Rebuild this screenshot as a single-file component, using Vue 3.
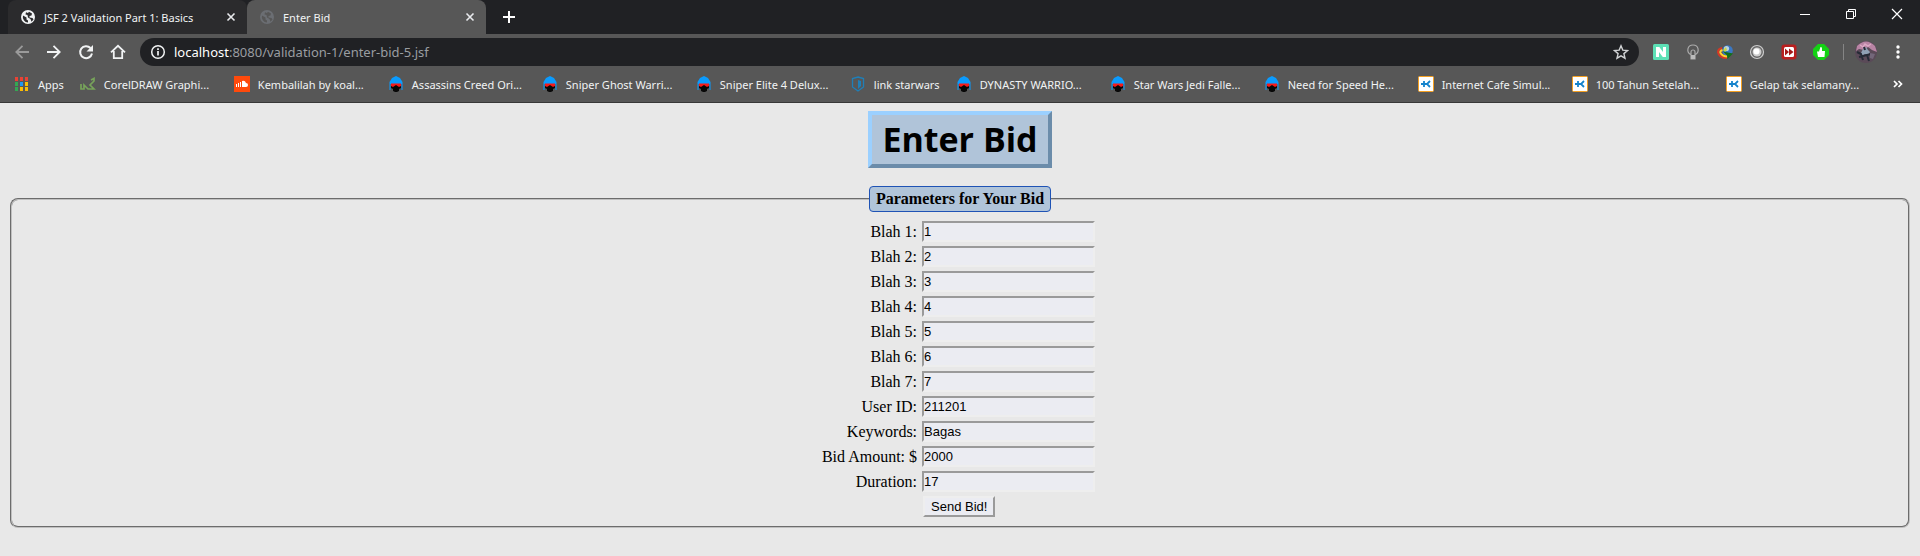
<script setup>
const bookmarks = [
  { icon: 'apps', label: 'Apps', short: true },
  { icon: 'snake', label: 'CorelDRAW Graphi...' },
  { icon: 'cloud', label: 'Kembalilah by koal...' },
  { icon: 'skull', label: 'Assassins Creed Ori...' },
  { icon: 'skull', label: 'Sniper Ghost Warri...' },
  { icon: 'skull', label: 'Sniper Elite 4 Delux...' },
  { icon: 'shield', label: 'link starwars', short: true },
  { icon: 'skull', label: 'DYNASTY WARRIO...' },
  { icon: 'skull', label: 'Star Wars Jedi Falle...' },
  { icon: 'skull', label: 'Need for Speed He...' },
  { icon: 'kaskus', label: 'Internet Cafe Simul...' },
  { icon: 'kaskus', label: '100 Tahun Setelah...' },
  { icon: 'kaskus', label: 'Gelap tak selamany...' }
]
const appDots = ['#ea4335', '#ea4335', '#ea4335', '#34a853', '#2196f3', '#fbbc05', '#34a853', '#fbbc05', '#fbbc05']
const fields = [
  { id: 'blah1', label: 'Blah 1:', value: '1' },
  { id: 'blah2', label: 'Blah 2:', value: '2' },
  { id: 'blah3', label: 'Blah 3:', value: '3' },
  { id: 'blah4', label: 'Blah 4:', value: '4' },
  { id: 'blah5', label: 'Blah 5:', value: '5' },
  { id: 'blah6', label: 'Blah 6:', value: '6' },
  { id: 'blah7', label: 'Blah 7:', value: '7' },
  { id: 'userId', label: 'User ID:', value: '211201' },
  { id: 'keywords', label: 'Keywords:', value: 'Bagas' },
  { id: 'bidAmount', label: 'Bid Amount: $', value: '2000' },
  { id: 'duration', label: 'Duration:', value: '17' }
]
const globe = 'M8 1a7 7 0 1 0 0 14A7 7 0 0 0 8 1zM3 6.500l3.500 2v2l1.500 1v2A5.600 5.600 0 0 1 3 6.500zM6 3.200l2 .8 1-1.300 3 1.800-.5 2-2 .5v1.500l3 .5 1 1.500-2 2.200-1-2.700-2.500-1.500-.5-2.500-2-.5z'
</script>

<template>
  <div class="browser">
    <header class="chrome">
      <div class="tab-strip">
        <div class="tab">
          <svg class="i16" viewBox="0 0 16 16"><path :d="globe" fill="#f1f3f4" fill-rule="evenodd" /></svg>
          <span class="tab-title">JSF 2 Validation Part 1: Basics</span>
          <button class="bare" aria-label="Close tab"><svg class="i16" viewBox="0 0 16 16"><path d="M4.500 4.500l7 7m0-7l-7 7" stroke="#e8eaed" stroke-width="1.600" /></svg></button>
        </div>
        <div class="tab active">
          <svg class="i16" viewBox="0 0 16 16"><path :d="globe" fill="#6b6e73" fill-rule="evenodd" /></svg>
          <span class="tab-title">Enter Bid</span>
          <button class="bare" aria-label="Close tab"><svg class="i16" viewBox="0 0 16 16"><path d="M4.500 4.500l7 7m0-7l-7 7" stroke="#e8eaed" stroke-width="1.600" /></svg></button>
        </div>
        <button class="bare new-tab" aria-label="New tab"><svg class="i16" viewBox="0 0 16 16"><path d="M8 2v12M2 8h12" stroke="#fff" stroke-width="2" /></svg></button>
        <div class="window-controls">
          <button class="bare" aria-label="Minimize"><svg class="i16" viewBox="0 0 16 16"><path d="M3 8.500h10" stroke="#fff" /></svg></button>
          <button class="bare" aria-label="Restore"><svg class="i16" viewBox="0 0 16 16"><path d="M3.500 5.500h7v7h-7zM5.500 5.500v-2h7v7h-2" fill="none" stroke="#fff" /></svg></button>
          <button class="bare" aria-label="Close"><svg class="i16" viewBox="0 0 16 16"><path d="M3 3l10 10M13 3L3 13" stroke="#fff" stroke-width="1.200" /></svg></button>
        </div>
      </div>

      <div class="toolbar">
        <nav class="nav">
          <button class="bare" aria-label="Back"><svg class="i16" viewBox="0 0 16 16"><path d="M15 8H2.500M8.500 1.800L2.300 8l6.200 6.200" fill="none" stroke="#9a9a9a" stroke-width="1.800" /></svg></button>
          <button class="bare" aria-label="Forward"><svg class="i16" viewBox="0 0 16 16"><path d="M1 8h12.500M7.500 1.800L13.700 8l-6.200 6.200" fill="none" stroke="#f1f3f4" stroke-width="1.800" /></svg></button>
          <button class="bare" aria-label="Reload"><svg class="i16" viewBox="0 0 16 16"><path d="M12.500 4A6 6 0 1 0 14 9.500" fill="none" stroke="#f1f3f4" stroke-width="2" /><path d="M15 1v6.500H8.500z" fill="#f1f3f4" /></svg></button>
          <button class="bare" aria-label="Home"><svg class="i16" viewBox="0 0 16 16"><path d="M1 8.300L8 1.800l7 6.500M3.800 7v7.200h8.400V7" fill="none" stroke="#f1f3f4" stroke-width="1.800" /></svg></button>
        </nav>
        <div class="omnibox">
          <svg class="i16" viewBox="0 0 16 16"><circle cx="8" cy="8" r="6.300" fill="none" stroke="#f1f3f4" stroke-width="1.500" /><path d="M8 7v4.500M8 4.300v1.700" stroke="#f1f3f4" stroke-width="1.700" /></svg>
          <a class="url" href="#"><b>localhost</b>:8080/validation-1/enter-bid-5.jsf</a>
          <button class="bare" aria-label="Bookmark this page"><svg class="i16" viewBox="0 0 16 16"><path d="M8 1.800l1.800 4.300 4.700.4-3.600 3.100 1.100 4.600L8 11.800l-4 2.400 1.100-4.600L1.500 6.500l4.700-.4z" fill="none" stroke="#d0d2d4" stroke-width="1.400" /></svg></button>
        </div>
        <div class="extensions">
          <button class="bare" aria-label="N extension"><svg class="i16" viewBox="0 0 16 16"><rect width="16" height="16" rx="1.500" fill="#5ce0b5" /><path d="M3 3h3.300l3.700 5V3h3v10H9.800L6 8v5H3z" fill="#fff" /></svg></button>
          <button class="bare" aria-label="Lights"><svg class="i16" viewBox="0 0 16 16"><path d="M5.500 10.500C1 7.500 2.500 1 8 1s7 6.500 2.500 9.500M6 15V8a2 2 0 0 1 4 0v7z" fill="none" stroke="#aaa" stroke-width="1.200" /><path d="M6 11h4v4H6z" fill="#bbb" /></svg></button>
          <button class="bare" aria-label="Download manager"><svg class="i16" viewBox="0 0 16 16"><circle cx="10.500" cy="6.500" r="5.300" fill="#3a78c4" /><circle cx="9.500" cy="4.500" r="2.600" fill="#b9d3e6" /><path d="M6 6l3-3 1 3-2 2z" fill="#c9d84a" /><path d="M5 4q-4 1-4 4 1 6 9 6" fill="none" stroke="#d63824" stroke-width="2" /><path d="M5.500 6q-3 1-2 3 2 3.500 7 3.500" fill="none" stroke="#ffd52e" stroke-width="2" /><path d="M6 7.500l10 2-5.500 5.500-.5-3.500z" fill="#14701a" /></svg></button>
          <button class="bare" aria-label="Sphere"><svg class="i16" viewBox="0 0 16 16"><circle cx="8" cy="8" r="6.500" fill="#666" stroke="#ccc" stroke-width="1.200" /><circle cx="8" cy="8" r="4.500" fill="#ccc" /><circle cx="7.500" cy="7.500" r="3" fill="#fff" /></svg></button>
          <button class="bare" aria-label="Skip ahead"><svg class="i16" viewBox="0 0 16 16"><rect x=".5" y=".5" width="15" height="15" rx="3" fill="#b91f1f" /><rect x="3" y="3" width="10" height="10" rx="1.500" fill="#fff" /><path d="M4 4.500L8 8l-4 3.500zM8 4.500L12.500 8 8 11.500z" fill="#a51818" /></svg></button>
          <button class="bare" aria-label="Thumbs up"><svg class="i16" viewBox="0 0 16 16"><path d="M5 0h6l5 5v6l-5 5H5l-5-5V5z" fill="#14d114" /><path d="M4 7.500h2L7.500 3q1.500-.5 1.500 1.500V7h3l-.5 6H5z" fill="#fff" /></svg></button>
        </div>
        <span class="divider"></span>
        <button class="bare avatar" aria-label="Profile"><svg viewBox="0 0 22 22"><circle cx="11" cy="11" r="11" fill="#5a4a58" /><path d="M2 5Q11-4 20 5l2 6-5-2-4-3-4 3-5-1-3 2z" fill="#b884a4" /><path d="M5 4l3 2 2-3 3 2 3-2" fill="none" stroke="#dba8c4" stroke-width="1.500" /><path d="M8 8l3-2 2 3 2 2-2 3-3-1-3 2-1-3z" fill="#8fa0b4" /><path d="M2 11l4 2 2 6M12 14l2 6M9 6l1 3M4 16l12-3" fill="none" stroke="#252a36" stroke-width="2" /><path d="M15 12l5 1-2 5-3-1z" fill="#73677a" /></svg></button>
        <button class="bare" aria-label="Menu"><svg class="i16" viewBox="0 0 16 16"><g fill="#fff"><circle cx="8" cy="3" r="1.700" /><circle cx="8" cy="8" r="1.700" /><circle cx="8" cy="13" r="1.700" /></g></svg></button>
      </div>

      <nav class="bookmarks">
        <a v-for="b in bookmarks" :key="b.label" href="#" class="bookmark" :class="{ short: b.short }">
          <svg class="i16" viewBox="0 0 16 16">
            <template v-if="b.icon === 'apps'"><rect v-for="(c, i) in appDots" :key="i" :x="1 + (i % 3) * 5" :y="1 + Math.floor(i / 3) * 5" width="3" height="4" :fill="c" /></template>
            <path v-else-if="b.icon === 'snake'" d="M1 8v5h3V9l4 4h6L10 9l4-4V2.500l-3 1.500" fill="none" stroke="#77a35a" stroke-width="1.700" />
            <template v-else-if="b.icon === 'cloud'"><rect width="16" height="16" fill="#ff4a0c" /><path d="M2.500 8v3M4.500 7v4M6.500 6v5" stroke="#fff" /><path d="M8 5q3-1 4 2 2 0 2 2t-2 2H8z" fill="#fff" /></template>
            <template v-else-if="b.icon === 'skull'"><path d="M1.500 14V6L4 2l4-2 4 2 2.500 4v8h-1V8h-11v6z" fill="#0a9bff" /><path d="M3 9h10v3l-2 1v2l-2 1H7l-2-1v-2l-2-1z" fill="#080808" /><path d="M3 7.500h10V10l-2 1-3-2-3 2-2-1z" fill="#f51a1a" /></template>
            <template v-else-if="b.icon === 'shield'"><path d="M8 1l5.500 1.500V11L8 15l-5.500-4V2.500z" fill="none" stroke="#1f7fb8" stroke-width="1.300" /><path d="M8 4l3 1v5l-3 3z" fill="#1f7fb8" /></template>
            <template v-else><rect x=".5" y=".5" width="15" height="15" rx="1" fill="#fff" stroke="#f5a021" /><path d="M3 8h6M6 5v6M12 5L9 8l3 3" fill="none" stroke="#1583cc" stroke-width="1.800" /></template>
          </svg>
          <span>{{ b.label }}</span>
        </a>
        <button class="bare more" aria-label="More bookmarks"><svg class="i16" viewBox="0 0 16 16"><path d="M4 5l3 3-3 3M8.500 5l3 3-3 3" fill="none" stroke="#fff" stroke-width="1.700" /></svg></button>
      </nav>
    </header>

    <main class="page">
      <h1>Enter Bid</h1>
      <form @submit.prevent>
        <fieldset>
          <legend>Parameters for Your Bid</legend>
          <div class="rows">
            <template v-for="f in fields" :key="f.id">
              <label :for="f.id">{{ f.label }}</label>
              <input :id="f.id" type="text" :value="f.value">
            </template>
            <button class="send" type="submit">Send Bid!</button>
          </div>
        </fieldset>
      </form>
    </main>
  </div>
</template>

<style>
body { margin: 0; background: #e8e8e8; }
</style>

<style scoped>
.browser { color: #000; font-family: "Liberation Serif", serif; font-size: 16px; }
.chrome { background: #575757; color: #f1f3f4; border-bottom: 1px solid #383838; font-family: "Noto Sans", sans-serif; font-size: 11px; }
.bare { display: flex; flex: none; padding: 0; border: 0; background: none; }
.i16 { display: block; flex: none; width: 16px; height: 16px; }
.tab-strip { display: flex; height: 34px; padding-left: 8px; background: #202124; }
.tab { display: flex; align-items: center; box-sizing: border-box; width: 239px; padding: 0 8px 0 12px; border-radius: 8px 8px 0 0; background: #2b2b2d; }
.tab.active { background: #575757; }
.tab-title { flex: 1; margin-left: 8px; white-space: nowrap; }
.new-tab { align-self: center; margin-left: 15px; }
.window-controls { display: flex; gap: 30px; margin: 6px 15px 0 auto; }
.toolbar { display: flex; align-items: center; height: 36px; padding: 0 14px; box-sizing: border-box; }
.nav { display: flex; gap: 16px; }
.omnibox { display: flex; flex: 1; align-items: center; height: 28px; margin: 0 14px; padding: 0 10px; border-radius: 14px; background: #202124; }
.url { flex: 1; margin-left: 8px; color: #9a9da1; font-size: 13px; text-decoration: none; }
.url b { color: #fff; font-weight: 400; }
.extensions { display: flex; gap: 16px; }
.divider { width: 1px; height: 16px; margin: 0 11px 0 14px; background: #858585; }
.avatar { width: 22px; height: 22px; margin-right: 13px; border-radius: 50%; }
.avatar svg { width: 22px; height: 22px; }
.bookmarks { display: flex; align-items: center; height: 28px; padding: 0 14px 4px; }
.bookmark { display: flex; align-items: center; box-sizing: border-box; width: 154px; gap: 8px; color: inherit; text-decoration: none; white-space: nowrap; }
.bookmark.short { width: auto; padding-right: 16px; }
.more { margin-left: auto; }
.page { display: flow-root; padding: 8px; }
h1 { width: max-content; margin: 0 auto 18px; padding: 4px 10px; border: 4px solid; border-color: #9bd0ff #6b8caa #6b8caa #9bd0ff; background: #b0c4d9; font: 700 34px/41px "Open Sans", sans-serif; }
fieldset { margin: 0 2px; padding: 9px 12px; border: 2px groove #c0c0c0; border-radius: 8px; }
legend { margin: 0 auto; padding: 3px 6px; border: 1px solid #1f53b5; border-radius: 4px; background: #b0c4d9; font-weight: 700; line-height: 18px; }
.rows { display: grid; grid-template-columns: auto auto; justify-content: center; align-items: center; gap: 4px 5px; padding-right: 3px; text-align: right; line-height: 18px; }
input { box-sizing: border-box; width: 173px; height: 21px; padding: 1px 0; border: 2px solid; border-color: #9a9a9a #eee #eee #9a9a9a; background: #ebecf2; font: 13px "Liberation Sans", sans-serif; }
.send { grid-column: 2; justify-self: start; height: 21px; margin-left: 1px; padding: 0 6px; border: 2px solid; border-color: #eee #9a9a9a #9a9a9a #eee; background: #ebecf2; font: 13px "Liberation Sans", sans-serif; }
</style>
